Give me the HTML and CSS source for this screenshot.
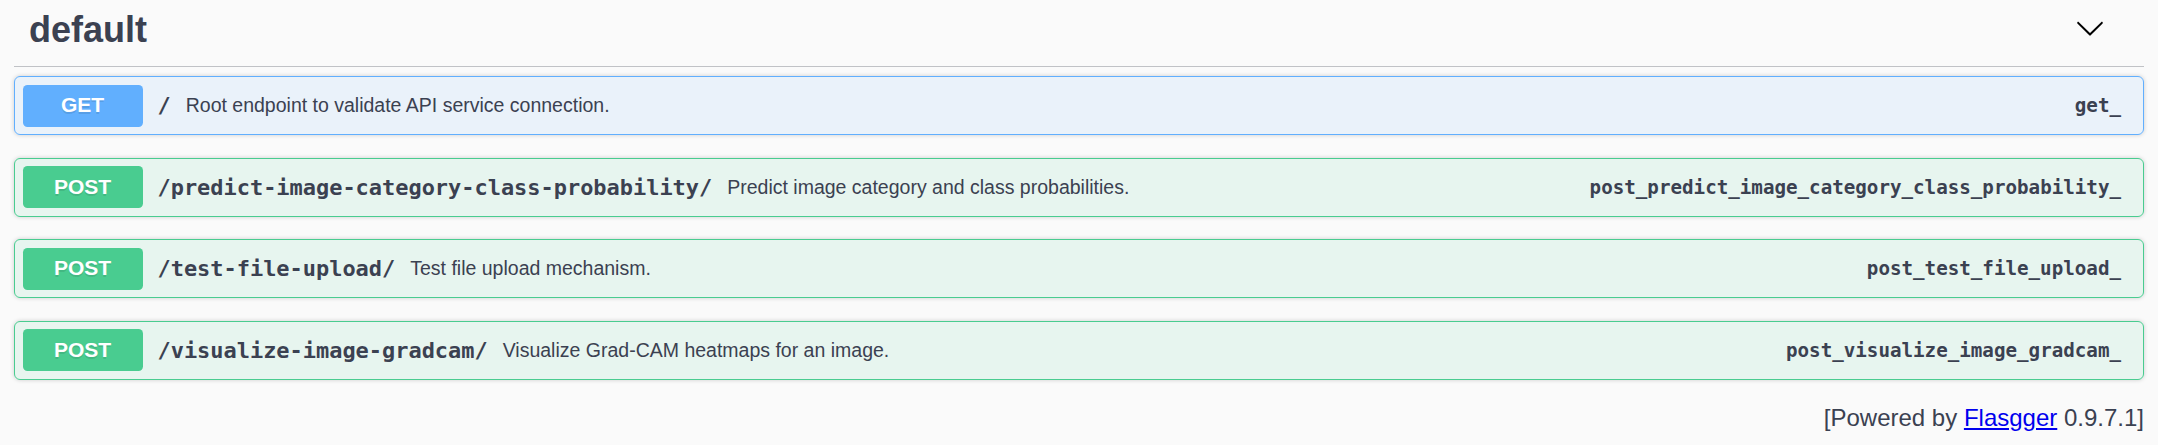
FILE: index.html
```html
<!DOCTYPE html>
<html lang="en">
<head>
<meta charset="utf-8">
<title>Flasgger</title>
<link rel="stylesheet" href="styles.css">
</head>
<body>
<div class="page">
  <div class="tag-section">
    <h3 class="tag">
      <span class="tag-name">default</span>
      <svg class="arrow" viewBox="0 0 20 20" aria-hidden="true"><path d="M17.418 6.109c.272-.268.709-.268.979 0s.271.701 0 .969l-7.908 7.83c-.27.268-.707.268-.979 0l-7.908-7.83c-.27-.268-.27-.701 0-.969.271-.268.709-.268.979 0L10 13.25l7.418-7.141z"/></svg>
    </h3>
    <div class="ops">
      <div class="op op-get">
        <div class="summary">
          <span class="method">GET</span>
          <span class="path">/</span>
          <span class="desc">Root endpoint to validate API service connection.</span>
          <span class="opid">get_</span>
        </div>
      </div>
      <div class="op op-post">
        <div class="summary">
          <span class="method">POST</span>
          <span class="path">/predict-image-category-class-probability/</span>
          <span class="desc">Predict image category and class probabilities.</span>
          <span class="opid">post_predict_image_category_class_probability_</span>
        </div>
      </div>
      <div class="op op-post">
        <div class="summary">
          <span class="method">POST</span>
          <span class="path">/test-file-upload/</span>
          <span class="desc">Test file upload mechanism.</span>
          <span class="opid">post_test_file_upload_</span>
        </div>
      </div>
      <div class="op op-post">
        <div class="summary">
          <span class="method">POST</span>
          <span class="path">/visualize-image-gradcam/</span>
          <span class="desc">Visualize Grad-CAM heatmaps for an image.</span>
          <span class="opid">post_visualize_image_gradcam_</span>
        </div>
      </div>
    </div>
  </div>
  <div class="footer">[Powered by <a href="#">Flasgger</a> 0.9.7.1]</div>
</div>
</body>
</html>
```
FILE: styles.css
```css
html, body {
  margin: 0;
  background: #fafafa;
}
body {
  overflow: hidden;
}
.page {
  padding: 0 14px;
}
.tag {
  margin: 0;
  display: flex;
  align-items: flex-start;
  height: 57px;
  padding: 9px 39px 0 15px;
  border-bottom: 1px solid rgba(59, 65, 81, 0.3);
  font-family: "Liberation Sans", Arial, sans-serif;
  font-weight: bold;
  font-size: 36px;
  line-height: normal;
  color: #3b4151;
}
.tag-name {
  flex: 1;
}
.arrow {
  width: 30px;
  height: 30px;
  margin-top: 4px;
  flex-shrink: 0;
  fill: #000;
}
.ops {
  padding-top: 9px;
}
.op {
  border: 1px solid #000;
  border-radius: 6px;
  margin-bottom: 22.5px;
  box-shadow: 0 0 4.5px rgba(0, 0, 0, 0.19);
}
.summary {
  display: flex;
  align-items: center;
  padding: 7.5px 8px 7.5px 7.5px;
}
.method {
  min-width: 120px;
  padding: 8.5px 0 9.5px;
  font-family: "Liberation Sans", Arial, sans-serif;
  font-weight: bold;
  font-size: 21px;
  line-height: 24px;
  text-align: center;
  color: #fff;
  border-radius: 4.5px;
  text-shadow: 0 1.5px 0 rgba(0, 0, 0, 0.1);
}
.path {
  padding: 0 15px;
  font-family: "DejaVu Sans Mono", monospace;
  font-weight: bold;
  font-size: 21.95px;
  color: #3b4151;
}
.desc {
  flex: 1;
  font-family: "Liberation Sans", Arial, sans-serif;
  font-size: 19.5px;
  color: #3b4151;
}
.opid {
  padding-right: 14px;
  font-family: "DejaVu Sans Mono", monospace;
  font-weight: bold;
  font-size: 19.2px;
  color: #3b4151;
}
.op-get {
  background: rgba(97, 175, 254, 0.1);
  border-color: #61affe;
}
.op-get .method {
  background: #61affe;
}
.op-post {
  background: rgba(73, 204, 144, 0.1);
  border-color: #49cc90;
}
.op-post .method {
  background: #49cc90;
}
.footer {
  padding-top: 2px;
  text-align: right;
  font-family: "Liberation Sans", Arial, sans-serif;
  font-size: 24px;
  color: #3b4151;
}
.footer a {
  color: #0000ee;
}
```
